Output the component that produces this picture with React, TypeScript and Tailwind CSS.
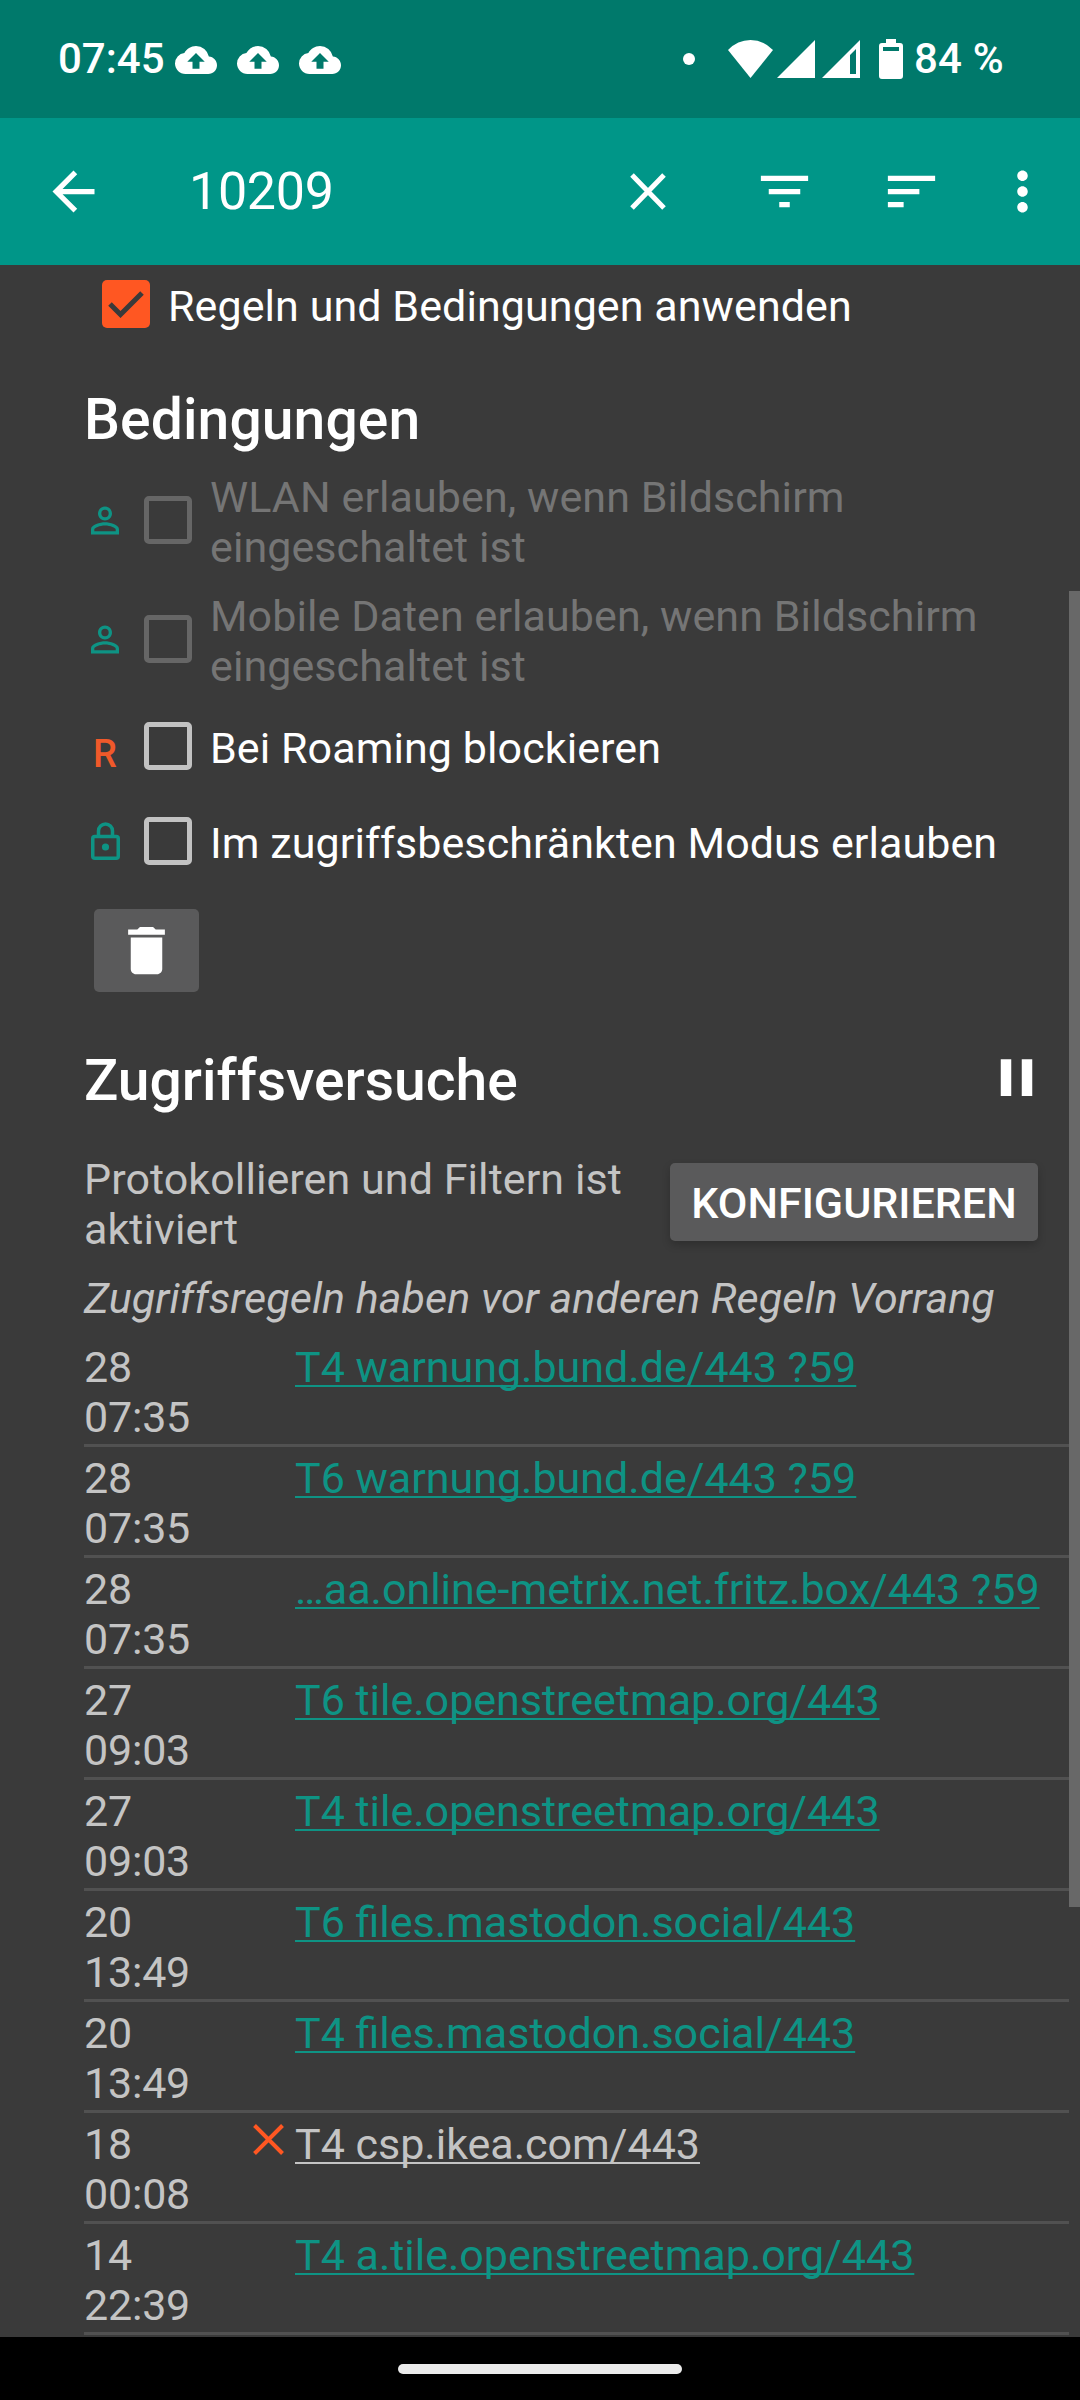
import type { ReactNode } from "react";
import {
    MdArrowBack,
    MdCloudUpload,
    MdDelete,
    MdFilterList,
    MdMoreVert,
    MdPause,
    MdPersonOutline,
    MdSort,
} from "react-icons/md";

type Attempt = {
    day: string;
    time: string;
    target: string;
    blocked?: boolean;
};

const attempts: Attempt[] = [
    { day: "28", time: "07:35", target: "T4 warnung.bund.de/443 ?59" },
    { day: "28", time: "07:35", target: "T6 warnung.bund.de/443 ?59" },
    { day: "28", time: "07:35", target: "…aa.online-metrix.net.fritz.box/443 ?59" },
    { day: "27", time: "09:03", target: "T6 tile.openstreetmap.org/443" },
    { day: "27", time: "09:03", target: "T4 tile.openstreetmap.org/443" },
    { day: "20", time: "13:49", target: "T6 files.mastodon.social/443" },
    { day: "20", time: "13:49", target: "T4 files.mastodon.social/443" },
    { day: "18", time: "00:08", target: "T4 csp.ikea.com/443", blocked: true },
    { day: "14", time: "22:39", target: "T4 a.tile.openstreetmap.org/443" },
];

function StatusBar() {
    return (
        <div className="flex h-[118px] shrink-0 items-center bg-[#00796b] pl-[58px] pr-[76px] font-medium">
            <span className="w-[117px] text-[42px] leading-[50px]">07:45</span>
            <div className="flex gap-5 pt-0.5">
                <MdCloudUpload size={42} />
                <MdCloudUpload size={42} />
                <MdCloudUpload size={42} />
            </div>
            <div className="ml-auto flex items-center">
                <span className="mr-[33px] size-3 rounded-full bg-white" />
                <svg width="45" height="38" viewBox="0 0 45 38" fill="currentColor">
                    <path d="M22.5 38 0 10Q9.500 0 22.500 0T45 10Z" />
                </svg>
                <svg className="ml-1" width="38" height="38" viewBox="0 0 38 38" fill="currentColor">
                    <path d="M38 0v38H0z" />
                </svg>
                <svg className="ml-[7px]" width="38" height="38" viewBox="0 0 38 38" fill="currentColor" fillRule="evenodd">
                    <path d="M38 0v38H0zM28 15v19h6V9z" />
                </svg>
                <svg className="ml-[19px]" width="24" height="40" viewBox="0 0 24 40" fill="currentColor" fillRule="evenodd">
                    <path d="M7 0h10v4h4a3 3 0 0 1 3 3v30a3 3 0 0 1-3 3H3a3 3 0 0 1-3-3V7a3 3 0 0 1 3-3h4zM4 8v4h16V8z" />
                </svg>
                <span className="ml-[11px] w-[90px] whitespace-nowrap text-[42px] leading-[50px] tracking-[0.2px]">84 %</span>
            </div>
        </div>
    );
}

function Toolbar() {
    return (
        <div className="flex h-[147px] shrink-0 items-center bg-[#009688]">
            <MdArrowBack size={63} className="ml-[42px]" />
            <span className="ml-[84px] text-[52px] leading-[60px] tracking-[-0.3px]">10209</span>
            <div className="ml-auto flex items-center pr-[26px]">
                <svg width="36" height="37" viewBox="0 0 36 37" fill="none" stroke="currentColor" strokeWidth="5">
                    <path d="M2 2l32 33M34 2 2 35" />
                </svg>
                <MdFilterList size={63} className="ml-[87px]" />
                <MdSort size={63} className="ml-16" />
                <MdMoreVert size={63} className="ml-12" />
            </div>
        </div>
    );
}

function LockIcon() {
    return (
        <svg className="-mt-0.5" width="29" height="38" viewBox="0 0 29 38" fill="none" stroke="currentColor" strokeWidth="3.5">
            <rect x="1.750" y="14.500" width="25.500" height="21.750" rx="2" />
            <path d="M7.500 14V9a7 7 0 0 1 14 0v5" />
            <circle cx="14.500" cy="25" r="3.600" fill="currentColor" stroke="none" />
        </svg>
    );
}

function Condition({ icon, disabled, children }: { icon: ReactNode; disabled?: boolean; children: ReactNode }) {
    return (
        <div className={`flex shrink-0 items-center tracking-[0.08px] ${disabled ? "h-[119px]" : "h-[95px]"}`}>
            <span className="flex w-[42px] justify-center text-[#0e9384]">{icon}</span>
            <span className={`-mt-px ml-[18px] size-12 rounded-[5px] border-[5px] ${disabled ? "border-[#666]" : "border-[#c2c2c2]"}`} />
            <span className={`ml-[18px] whitespace-nowrap pt-[3px] ${disabled ? "text-[#757575]" : "text-white"}`}>{children}</span>
        </div>
    );
}

function AttemptRow({ day, time, target, blocked }: Attempt) {
    return (
        <div className="flex h-[111px] shrink-0 border-b-[3px] border-[#515151] pt-1.5">
            <div className="w-[169px] tracking-[-0.2px]">
                <div>{day}</div>
                <div>{time}</div>
            </div>
            <div className="w-[42px] pt-[5px]">
                {blocked && (
                    <svg width="31" height="31" viewBox="0 0 31 31" fill="none" stroke="#ff5722" strokeWidth="4">
                        <path d="M1.500 1.500l28 28M29.500 1.500l-28 28" />
                    </svg>
                )}
            </div>
            <a className={`whitespace-nowrap underline decoration-2 underline-offset-[3px] [text-decoration-skip-ink:none] ${blocked ? "" : "text-[#0e9384]"}`}>
                {target}
            </a>
        </div>
    );
}

export default function App() {
    return (
        <div className="flex h-[2400px] w-[1080px] flex-col overflow-hidden bg-[#3a3a3a] font-['Roboto',sans-serif] text-white">
            <StatusBar />
            <Toolbar />

            <div className="relative flex h-[2072px] shrink-0 flex-col overflow-hidden pl-[84px] pr-[11px] text-[43px] leading-[50px] text-[#c4c4c4]">
                <div className="flex h-[122px] shrink-0 items-start pl-[18px] pt-[15px] text-white">
                    <span className="flex size-12 items-center justify-center rounded-[5px] bg-[#ff5722]">
                        <svg width="36" height="28" viewBox="0 0 36 28" fill="none" stroke="#3a3a3a" strokeWidth="5">
                            <path d="M2 14l10.500 10.500L34 3" />
                        </svg>
                    </span>
                    <span className="ml-[18px] pt-px tracking-[0.08px]">Regeln und Bedingungen anwenden</span>
                </div>

                <h2 className="mb-2 text-[57px] font-medium leading-[66px] tracking-[0.1px] text-white">Bedingungen</h2>
                <Condition icon={<MdPersonOutline size={43} />} disabled>
                    WLAN erlauben, wenn Bildschirm
                    <br />
                    eingeschaltet ist
                </Condition>
                <Condition icon={<MdPersonOutline size={43} />} disabled>
                    Mobile Daten erlauben, wenn Bildschirm
                    <br />
                    eingeschaltet ist
                </Condition>
                <Condition icon={<span className="pt-[15px] text-[38px] font-medium leading-[44px] text-[#f0592a]">R</span>}>
                    Bei Roaming blockieren
                </Condition>
                <Condition icon={<LockIcon />}>Im zugriffsbeschränkten Modus erlauben</Condition>

                <button className="ml-[10px] mt-5 flex h-[83px] w-[105px] shrink-0 items-center justify-center rounded-[5px] bg-[#5a5a5b] text-white">
                    <MdDelete size={63} />
                </button>

                <div className="mt-[56px] flex h-[66px] shrink-0 items-center justify-between pr-[21px] text-white">
                    <h2 className="text-[57px] font-medium leading-[66px]">Zugriffsversuche</h2>
                    <MdPause size={63} className="-mt-2" />
                </div>

                <div className="mt-[40px] flex h-[119px] shrink-0 items-start justify-between pr-[31px]">
                    <p className="w-[560px] tracking-[0.08px]">Protokollieren und Filtern ist aktiviert</p>
                    <button className="mt-[9px] h-[78px] w-[368px] rounded-[5px] bg-[#5a5a5b] pt-0.5 font-medium text-white shadow-[0_4px_8px_rgba(0,0,0,0.2)]">
                        KONFIGURIEREN
                    </button>
                </div>
                <p className="mb-[13px] italic tracking-[0.06px]">Zugriffsregeln haben vor anderen Regeln Vorrang</p>

                {attempts.map((attempt, i) => (
                    <AttemptRow key={i} {...attempt} />
                ))}

                <div className="absolute right-0 top-[326px] h-[1316px] w-[11px] bg-[#686868]" />
            </div>

            <div className="flex h-[63px] shrink-0 items-center justify-center bg-black pt-px">
                <div className="h-[10px] w-[284px] rounded-full bg-[#ebebeb]" />
            </div>
        </div>
    );
}
